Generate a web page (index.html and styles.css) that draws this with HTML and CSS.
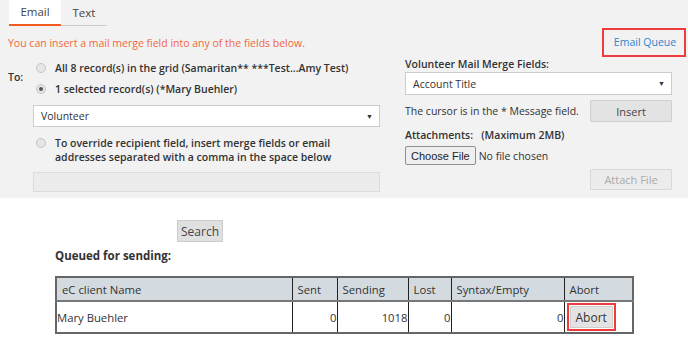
FILE: index.html
```html
<!DOCTYPE html>
<html>
<head>
<meta charset="utf-8">
<link rel="stylesheet" href="styles.css">
</head>
<body>
<div class="panel">
  <div class="tabs">
    <div class="tab active">Email</div>
    <div class="tab">Text</div>
  </div>
  <div class="notice-row">
    <span class="notice">You can insert a mail merge field into any of the fields below.</span>
    <a class="queue-link">Email Queue</a>
  </div>
  <div class="form">
    <div class="left">
      <div class="to-block">
        <div class="to-label">To:</div>
        <div class="to-options">
          <div class="radio-row"><span class="radio"></span><span class="strong">All 8 record(s) in the grid (Samaritan** ***Test...Amy Test)</span></div>
          <div class="radio-row"><span class="radio checked"></span><span class="strong">1 selected record(s) (*Mary Buehler)</span></div>
        </div>
      </div>
      <div class="select wide"><span>Volunteer</span><span class="caret">▼</span></div>
      <div class="radio-row multi"><span class="radio"></span><span class="strong">To override recipient field, insert merge fields or email<br>addresses separated with a comma in the space below</span></div>
      <div class="blank-input"></div>
    </div>
    <div class="right">
      <div class="label">Volunteer Mail Merge Fields:</div>
      <div class="select"><span>Account Title</span><span class="caret">▼</span></div>
      <div class="row-between insert-row"><span>The cursor is in the * Message field.</span><button class="btn">Insert</button></div>
      <div class="label attach-label">Attachments: &nbsp; (Maximum 2MB)</div>
      <div class="file-row"><button class="file-btn">Choose File</button><span>No file chosen</span></div>
      <div class="attach-row"><button class="btn disabled">Attach File</button></div>
    </div>
  </div>
</div>
<div class="queue">
  <button class="search-btn">Search</button>
  <div class="queued-title">Queued for sending:</div>
  <table class="grid">
    <thead>
      <tr><th class="c-name">eC client Name</th><th class="c-sent">Sent</th><th class="c-sending">Sending</th><th class="c-lost">Lost</th><th class="c-syntax">Syntax/Empty</th><th class="c-abort">Abort</th></tr>
    </thead>
    <tbody>
      <tr><td class="name">Mary Buehler</td><td class="num">0</td><td class="num">1018</td><td class="num">0</td><td class="num">0</td><td class="abort-cell"><span class="abort-wrap"><button class="abort-btn">Abort</button></span></td></tr>
    </tbody>
  </table>
</div>
</body>
</html>
```
FILE: styles.css
```css
* { box-sizing: border-box; }
body {
  margin: 0;
  font-family: "Open Sans", "Liberation Sans", sans-serif;
  font-size: 11.3px;
  color: #333;
  background: #fff;
}
.panel {
  background: #f2f2f2;
  height: 198px;
  padding: 0 2px 0 8px;
  font-size: 10.5px;
}
.tabs { display: flex; padding-left: 1px; }
.tab {
  height: 26px;
  line-height: 24px;
  font-size: 11.5px;
  color: #444;
  border-bottom: 1px solid #ccc;
  text-align: center;
}
.tab.active {
  width: 52px;
  background: #fff;
  border-bottom: 2px solid #f25c1e;
}
.tab:not(.active) { width: 46px; line-height: 25px; }
.notice-row {
  display: flex;
  justify-content: space-between;
  align-items: center;
  margin-top: 2px;
  height: 29px;
}
.notice { color: #f0683e; }
.queue-link {
  color: #2f84cc;
  border: 2px solid #ef3b3b;
  height: 29px;
  line-height: 25px;
  width: 84px;
  text-align: center;
  padding-left: 2px;
}
.form { display: flex; }
.left { width: 372px; }
.right { width: 267px; margin-left: 25px; }
.to-block { display: flex; }
.to-label { width: 25px; font-weight: 600; padding-top: 13px; }
.radio-row { display: flex; align-items: center; height: 21px; padding-left: 3px; }
.strong { font-weight: 600; }
.radio {
  width: 10px; height: 10px;
  border-radius: 50%;
  border: 1px solid #c4c4c4;
  background: #e6e6e6;
  margin-right: 9px;
  flex: none;
  position: relative;
}
.radio.checked::after {
  content: "";
  position: absolute;
  left: 2px; top: 2px;
  width: 4px; height: 4px;
  border-radius: 50%;
  background: #555;
}
.select {
  display: flex;
  justify-content: space-between;
  align-items: center;
  height: 23px;
  background: #fff;
  border: 1px solid #ccc;
  padding: 0 6px 0 7px;
  font-size: 10.5px;
}
.select.wide { margin-left: 25px; margin-top: 6px; height: 22px; }
.caret { font-size: 7px; color: #333; }
.radio-row.multi {
  margin-left: 25px;
  margin-top: 9px;
  height: auto;
  align-items: flex-start;
  line-height: 14px;
}
.radio-row.multi .radio { margin-top: 2px; }
.blank-input {
  margin-left: 25px;
  margin-top: 8px;
  height: 20px;
  background: #ececec;
  border: 1px solid #dcdcdc;
}
.label { font-weight: 600; line-height: 15px; }
.row-between {
  display: flex;
  justify-content: space-between;
  align-items: center;
}
.insert-row { margin-top: 5px; height: 22px; }
.btn {
  width: 82px;
  height: 22px;
  font: inherit;
  font-size: 11px;
  color: #444;
  background: #e3e3e3;
  border: 1px solid #cfcfcf;
  border-radius: 1px;
  padding: 0;
}
.btn.disabled { color: #aaa; background: #ececec; border-color: #d9d9d9; height: 21px; }
.attach-label { margin-top: 6px; }
.file-row { display: flex; align-items: center; margin-top: 3px; gap: 3px; }
.file-btn {
  height: 19px;
  font-family: "Liberation Sans", Arial, sans-serif;
  font-size: 11px;
  color: #222;
  background: #efefef;
  border: 1px solid #8f8f8f;
  border-radius: 2px;
  padding: 0 5px;
}
.attach-row { display: flex; justify-content: flex-end; margin-top: 4px; }
.queue { padding-left: 55px; }
.search-btn {
  display: block;
  margin: 22px 0 0 122px;
  height: 22px;
  width: 46px;
  padding: 0;
  font: inherit;
  font-size: 12px;
  color: #444;
  background: #e0e0e0;
  border: 1px solid #cdcdcd;
}
.queued-title { font-weight: 700; margin-top: 6px; line-height: 15px; font-size: 11.5px; }
.grid {
  margin-top: 13px;
  border-collapse: collapse;
  border: 2px solid #666;
}
.grid th {
  background: #d4dbe0;
  font-weight: 400;
  text-align: left;
  height: 24px;
  padding: 0 5px;
  border: 1px solid #222;
  border-bottom: 2px solid #777;
}
.grid td {
  height: 32px;
  border: 1px solid #222;
  padding: 0;
}
.c-name { width: 236px; }
.c-sent { width: 45px; }
.c-sending { width: 71px; }
.c-lost { width: 43px; }
.c-syntax { width: 113px; }
.c-abort { width: 69px; }
.grid td.num { text-align: right; }
.abort-cell { padding-left: 2px !important; }
.abort-wrap {
  display: inline-block;
  border: 2px solid #ef3b3b;
  padding: 1px;
  vertical-align: middle;
}
.abort-btn {
  display: block;
  height: 22px;
  font: inherit;
  font-size: 12px;
  color: #333;
  background: #e3e3e3;
  border: 1px solid #cfcfcf;
  padding: 0 5px;
}
```
